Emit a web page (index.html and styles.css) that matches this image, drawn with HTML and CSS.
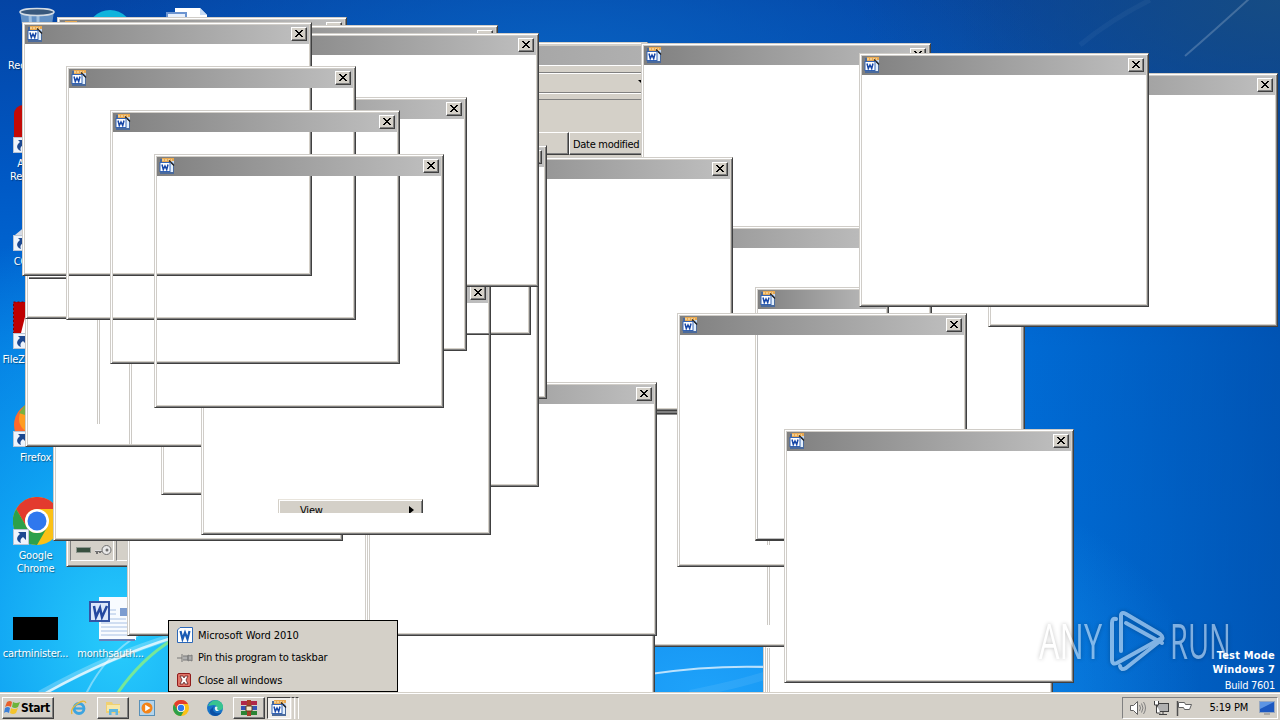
FILE: index.html
```
<!DOCTYPE html>
<html lang="en">
<head>
    <meta charset="UTF-8">
    <meta name="viewport" content="width=device-width, initial-scale=1.0">
    <link rel="stylesheet" href="styles.css">

    <title>Desktop</title>
</head>
<body>
    <svg class="sprites" width="0" height="0">
        <symbol id="doc" viewBox="0 0 16 16">
            <rect x="1" y="1" width="14" height="15" fill="#4a6a9c"/>
            <path d="M3 0h12v4H3z" fill="#e8a850"/>
            <path d="M3 2h10" stroke="#fff0c8" stroke-dasharray="2 1"/>
            <path d="M8 4h3l3 3v7H8z" fill="#e4f0fc"/>
            <path d="M10 2.500l5 5" stroke="#202020" stroke-width="1.3"/>
            <path d="M12 3h3v3z" fill="#c4d8f0"/>
            <rect x="1" y="4.500" width="10" height="9" fill="#fff" stroke="#3464b4"/>
            <path d="M3 6.500l1.300 5L6 8l1.700 3.500L9 6.500" fill="none" stroke="#1848a8" stroke-width="1.5"/>
        </symbol>
        <symbol id="shortcut" viewBox="0 0 16 16">
            <rect x="0.5" y="0.5" width="15" height="15" fill="#eef4fc" stroke="#b8c4d4"/>
            <path d="M5 3h8v8l-3-3c-3 2-3 4-2 6-5-2-5-6-1-9z" fill="#1c4890"/>
        </symbol>
        <symbol id="chrome" viewBox="0 0 48 48">
            <circle cx="24" cy="24" r="24" fill="#fbc116"/>
            <path d="M3.200 12A24 24 0 0 1 44.800 12H24a12 12 0 0 0-10.400 18z" fill="#e33b2e"/>
            <path d="M3.200 12A24 24 0 0 0 24 48l10.400-18a12 12 0 0 1-20.800 0z" fill="#2da04a"/>
            <circle cx="24" cy="24" r="12" fill="#fff"/>
            <circle cx="24" cy="24" r="9.500" fill="#2f78ee"/>
        </symbol>
    </svg>

    <div class="desktop">
        <svg class="rays" viewBox="0 0 1280 720">
            <g fill="none" stroke="#fff">
                <path d="M40 694Q110 655 175 636" stroke-width="7" opacity=".25"/>
                <path d="M44 694Q110 657 175 637" stroke-width="2.500" opacity=".75"/>
                <path d="M86 694Q105 655 140 634" stroke-width="2" opacity=".4"/>
                <path d="M117 694Q140 660 172 640" stroke="#8cf080" stroke-width="3" opacity=".8"/>
                <path d="M650 674Q710 665 768 667" stroke-width="2" opacity=".7"/>
                <path d="M690 694Q740 684 770 674" stroke-width="8" opacity=".08"/>
                <path d="M1250 -2Q1215 30 1185 56" stroke-width="2" opacity=".2"/>
                <path d="M1150 0Q1110 20 1080 45" stroke-width="5" opacity=".04"/>
            </g>
        </svg>

        <div class="icons">
            <div class="icon">
                <svg viewBox="0 0 48 48"><path d="M7 4l6 42h22l6-42z" fill="#7ca4cc" opacity=".8"/><path d="M17 8l2 36M25 8v36" stroke="#c4dcf0" stroke-width="3" opacity=".6"/><ellipse cx="24" cy="5" rx="17" ry="3.500" fill="#38587c" stroke="#d4dce4" stroke-width="1.500"/></svg>
                <span>Recycle Bin</span>
            </div>
            <div class="icon">
                <svg viewBox="0 0 48 48"><rect x="1" width="46" height="46" rx="9" fill="#c40a06"/><use href="#shortcut" y="32" width="16" height="16"/></svg>
                <span>Acrobat Reader DC</span>
            </div>
            <div class="icon">
                <svg viewBox="0 0 48 48"><path d="M2 32L14 22h20v20z" fill="#d8dce4"/><use href="#shortcut" y="32" width="16" height="16"/></svg>
                <span>CCleaner</span>
            </div>
            <div class="icon">
                <svg viewBox="0 0 48 48"><rect x="0.500" y="1" width="46" height="46" fill="#bf0000" stroke="#800000" stroke-dasharray="2 2"/><path d="M8 32l4-16h20v16z" fill="#fff"/><use href="#shortcut" y="32" width="16" height="16"/></svg>
                <span>FileZilla Client</span>
            </div>
            <div class="icon">
                <svg viewBox="0 0 48 48"><circle cx="24" cy="26" r="23" fill="#ff6a2c"/><circle cx="20" cy="20" r="14" fill="#ff9c20"/><path d="M6 14l6-8v10z" fill="#78b040"/><use href="#shortcut" y="32" width="16" height="16"/></svg>
                <span>Firefox</span>
            </div>
            <div class="icon">
                <svg viewBox="0 0 48 48"><use href="#chrome" width="48" height="48"/><use href="#shortcut" y="32" width="16" height="16"/></svg>
                <span>Google Chrome</span>
            </div>
            <div class="icon">
                <svg viewBox="0 0 48 48"><rect y="22" width="45" height="23"/></svg>
                <span>cartminister...</span>
            </div>
            <div class="icon column-two">
                <svg viewBox="0 0 48 48"><circle cx="22" cy="26" r="23" fill="#10b4dc"/></svg>
            </div>
            <div class="icon column-two last-row">
                <svg viewBox="0 0 48 48"><path d="M11 2h37v43H11z" fill="#f8fbff"/><path d="M11 45h36" stroke="#6880b8" stroke-width="2"/><path d="M13 15h15M13 19h15M13 24h25M13 28h30M13 32h30M13 36h30M13 40h30" stroke="#a8c0e4"/><rect x="32" y="13" width="8" height="8" fill="#7c9cd0"/><rect x="2" y="7" width="19" height="19" fill="#dce6fa" stroke="#3454a4" stroke-width="2"/><path d="M6 11l2 11 4-9 2 9 5-11" fill="none" stroke="#2448a0" stroke-width="2.500"/></svg>
                <span>monthsauth...</span>
            </div>
            <div class="icon column-three">
                <svg viewBox="0 0 48 48"><path d="M12 1h25l7 7v38H12z" fill="#fff"/><path d="M37 1v7h7" fill="#c8dcf4"/><rect x="4" y="6" width="19" height="19" fill="#e8f0fc" stroke="#6c94d0" stroke-width="2"/></svg>
            </div>
        </div>

        <div class="explorer">
            <div class="explorer-title"></div>
            <div class="explorer-bar address"></div>
            <div class="explorer-bar tools"><i class="arrow-down"></i></div>
            <div class="explorer-bar info"></div>
            <div class="explorer-head">
                <div class="head-cell name-cell"></div>
                <div class="head-cell">Date modified</div>
            </div>
            <div class="explorer-list"></div>
            <div class="explorer-status">
                <div class="status-cell">
                    <svg width="38" height="14" viewBox="0 0 38 14"><rect x="1.500" y="4.500" width="14" height="5" fill="#385040" stroke="#909890"/><path d="M20 8h9M22 8v3M25 8v2" stroke="#707070" stroke-width="2"/><path d="M20 7.500h9" stroke="#e0e0e0"/><circle cx="31.500" cy="7" r="4.500" fill="#e8e8e8" stroke="#707070"/><circle cx="32" cy="7" r="1.500" fill="#707070"/></svg>
                </div>
                <div class="status-cell wide"></div>
            </div>
        </div>

        <div id="windows"></div>

        <div class="submenu"><span>View</span><i class="arrow-right"></i></div>

        <svg class="watermark" viewBox="0 0 200 70">
            <text x="3" y="53" textLength="63" lengthAdjust="spacingAndGlyphs">ANY</text>
            <text x="134" y="53" textLength="61" lengthAdjust="spacingAndGlyphs">RUN</text>
            <g fill="none" stroke="#fff" stroke-width="4" stroke-linejoin="round" stroke-linecap="round">
                <path d="M80 13q-4-1-4 4v37q0 5 5 3l43-24"/>
                <path d="M85 45V10q0-5 5-2l34 20q5 4 0 7L90 62q-5 3-6-2"/>
                <path d="M90 17l36 20"/>
            </g>
        </svg>

        <div class="build">
            <b>Test Mode</b>
            <b>Windows 7</b>
            <span>Build 7601</span>
        </div>
    </div>

    <div class="jumplist">
        <div class="jump-item">
            <svg viewBox="0 0 16 16"><path d="M3 .5h12.500v15H.5V3z" fill="#fff" stroke="#2c68b8"/><path d="M3.500 4l2 8L8 5.500l2.500 6.500 2-8" fill="none" stroke="#1c5cb4" stroke-width="2.200"/></svg>
            <span class="jump-app">Microsoft Word 2010</span>
        </div>
        <div class="jump-item">
            <svg viewBox="0 0 16 16"><path d="M0 8h5M5 4v8M6 6h5v4H6M11 5q2 2 4 0v6q-2-2-4 0z" fill="#b0b0b0" stroke="#787878"/></svg>
            <span class="jump-pin">Pin this program to taskbar</span>
        </div>
        <div class="jump-item">
            <svg viewBox="0 0 16 16"><rect x="0.500" y="1.500" width="13" height="13" rx="1.500" fill="#e07468" stroke="#901c1c"/><path d="M3 4h3l1 2 1-2h3L9 8l2 4H8l-1-2-1 2H3l2-4z" fill="#fff" stroke="#602020" stroke-width=".8"/></svg>
            <span class="jump-close">Close all windows</span>
        </div>
    </div>

    <div class="taskbar">
        <div class="start">
            <svg width="17" height="15" viewBox="0 0 17 15"><path d="M3 2q3-2 5 0L7 7Q4 5 1 7z" fill="#e8602c"/><path d="M9 2q3 2 7 0l-2 5q-3 2-6 0z" fill="#6cb43c"/><path d="M1 8q3-2 5 0l-1 5q-3-2-5 0z" fill="#3c80d8"/><path d="M7 8q3 2 7 0l-2 5q-3 2-6 0z" fill="#f4c42c"/></svg>
            <b>Start</b>
        </div>
        <div class="task">
            <svg viewBox="0 0 16 16"><circle cx="8" cy="8.500" r="5" fill="none" stroke="#3ca4e0" stroke-width="2.800"/><path d="M4 8.500h9" stroke="#3ca4e0" stroke-width="2.200"/><path d="M1 14Q-1 9 6 4t9-1" fill="none" stroke="#e8b838" stroke-width="1.300"/></svg>
        </div>
        <div class="task raised">
            <svg viewBox="0 0 16 16"><path d="M1 2h6l1 2h7v9H1z" fill="#f0d070"/><path d="M2 5h13v6H2z" fill="#f8e8a8"/><path d="M4 15V9h9v6h-2.500v-3h-4v3z" fill="#60b8e0"/></svg>
        </div>
        <div class="task">
            <svg viewBox="0 0 16 16"><rect x=".5" y=".5" width="15" height="15" fill="#b4d4ec" stroke="#5890b8"/><circle cx="8" cy="8" r="5.500" fill="#f48418"/><path d="M6.200 4.800v6.400L11.500 8z" fill="#fff"/></svg>
        </div>
        <div class="task">
            <svg viewBox="0 0 16 16"><use href="#chrome" width="16" height="16"/></svg>
        </div>
        <div class="task">
            <svg viewBox="0 0 16 16"><circle cx="8" cy="8" r="8" fill="#1874c8"/><path d="M1 6Q4 0 9 .3q7 1 7 7 0 3-4 3-4 0-2-3-1-3-5-2z" fill="#38c490"/><path d="M7 6q-3 5 2 7 4 1 6-1-3 4-7 4-6-1-5-6z" fill="#0c50a4"/><path d="M8 7q1-1 2.500 0-1.500 3 2.500 4H9Q7 9 8 7z" fill="#e8f4f4"/></svg>
        </div>
        <div class="task raised">
            <svg viewBox="0 0 16 16"><path d="M0 1h16v4H0z" fill="#b02848"/><path d="M0 6h16v4H0z" fill="#3454b4"/><path d="M0 11h16v4H0z" fill="#2c8434"/><path d="M6 0h4v16H6z" fill="#a83c28"/><path d="M5 6h6v5H5z" fill="#f4e8c8" stroke="#604020"/></svg>
        </div>
        <div class="task pressed">
            <svg viewBox="0 0 16 16"><use href="#doc" width="16" height="16"/></svg>
        </div>
        <div class="stack"></div>
        <div class="stack"></div>
        <div class="tray">
            <svg width="17" height="16" viewBox="0 0 17 16"><path d="M1.500 5.500h3l4-4v13l-4-4h-3z" fill="#fff" stroke="#606060"/><path d="M10.500 5q2 3 0 6M12.500 3.500q3 4.500 0 9M14.500 2q4 6 0 12" fill="none" stroke="#808080"/></svg>
            <svg width="16" height="16" viewBox="0 0 16 16"><rect x="4.500" y="3.500" width="11" height="8" fill="#b0b0b0" stroke="#404040"/><path d="M6 14.500h8M10 12v2" stroke="#404040"/><path d="M1.500 1v4h4V1M3.500 5v8h4" fill="#fff" stroke="#404040"/></svg>
            <svg width="17" height="16" viewBox="0 0 17 16"><path d="M1.500 1v15" stroke="#505050" stroke-width="1.500"/><path d="M2.500 2.500h6l1 2h6l-2 5h-5l-1-2h-5z" fill="#fff" stroke="#606060"/></svg>
            <span class="clock">5:19 PM</span>
            <svg class="show-desktop" width="16" height="14" viewBox="0 0 16 14"><rect x=".5" y=".5" width="15" height="11" fill="#1c58c0" stroke="#98a8c0"/><path d="M1 1h14L1 8z" fill="#5c94e4"/><path d="M5 13h6" stroke="#808080"/></svg>
        </div>
    </div>

    <script>
        // back to front: [x, y, kind, width, height]
        const windows = [
            [127, 382],
            [735, 210],
            [763, 450],
            [642, 100],
            [641, 43],
            [599, 226],
            [600, 393],
            [365, 450],
            [53, 287],
            [161, 241],
            [25, 193],
            [25, 65],
            [755, 287, 'window', 134, 254],
            [443, 157],
            [677, 313],
            [755, 335, 'trail', 31, 206],
            [988, 73],
            [859, 53],
            [784, 429],
            [367, 382],
            [257, 145],
            [249, 233],
            [241, 81],
            [201, 281],
            [467, 333, 'edge-h', 22, 2],
            [57, 17],
            [208, 25],
            [249, 33],
            [177, 97],
            [66, 66, 'blank'],
            [110, 110, 'blank'],
            [154, 154, 'blank'],
            [22, 22],
            [29, 277, 'edge-h', 37, 2],
            [66, 66, 'hollow'],
            [110, 110, 'hollow'],
            [154, 154, 'hollow'],
            // edges left behind by dragged windows
            [97, 320, 'edge-v', 3, 104],
            [129, 364, 'edge-v', 3, 81],
            [1021, 327, 'edge-v', 1, 103],
            [767, 541, 'edge-v', 3, 4],
            [767, 567, 'edge-v', 3, 58],
            [767, 648, 'edge-v', 3, 44],
            [657, 411, 'edge-h', 20, 3]
        ];

        const frame = `
            <div class="title">
                <svg class="title-icon"><use href="#doc" width="16" height="16"/></svg>
                <div class="close"><svg width="10" height="8" viewBox="0 0 10 8"><path d="M1 0h2v1h1v1h2V1h1V0h2v1H8v1H7v1H6v1h1v1h1v1h1v1H7V6H6V5H4v1H3v1H1V6h1V5h1V4h1V3H3V2H2V1H1z"/></svg></div>
            </div>`;

        const layer = document.getElementById('windows');
        windows.forEach(([x, y, kind = 'window', w = 290, h = 254]) => {
            const el = document.createElement('div');
            el.className = kind === 'hollow' ? 'window hollow' : kind;
            el.style.cssText = `left:${x}px;top:${y}px;width:${w}px;height:${h}px`;
            if (kind === 'window' || kind === 'hollow') {
                el.innerHTML = frame;
            }
            layer.appendChild(el);
        });
    </script>
</body>
</html>
```
FILE: styles.css
```
* {
    box-sizing: border-box;
}

body {
    margin: 0;
    width: 1280px;
    height: 720px;
    overflow: hidden;
    display: flex;
    flex-direction: column;
    font-family: "DejaVu Sans Condensed", "DejaVu Sans", sans-serif;
    font-stretch: condensed;
    font-size: 11px;
    letter-spacing: -0.2px;
    color: black;
}

.sprites {
    position: absolute;
}

.desktop {
    position: relative;
    height: 692px;
    overflow: hidden;
    background:
        radial-gradient(ellipse 330px 420px at 120px 640px, #28ccfc 0%, rgba(20, 180, 250, 0.7) 45%, rgba(0, 150, 240, 0) 100%),
        radial-gradient(ellipse 420px 200px at 1280px 0, #164c84 0%, rgba(20, 76, 136, 0) 100%),
        radial-gradient(ellipse 500px 260px at 700px 690px, #1ea2fa 0%, rgba(20, 140, 240, 0) 100%),
        linear-gradient(90deg, rgba(0, 60, 150, 0) 75%, rgba(0, 56, 140, 0.5) 100%),
        radial-gradient(ellipse 500px 160px at 560px 60px, #0860c0 0%, rgba(0, 90, 190, 0) 100%),
        linear-gradient(180deg, #0444a4 0%, #0058c4 25%, #0070dc 50%, #0074e0 100%);
}

.rays,
#windows {
    position: absolute;
    left: 0;
    top: 0;
    width: 1280px;
    height: 720px;
}

/* desktop icons */

.icons {
    display: grid;
    grid-template-columns: repeat(3, 71px);
    grid-template-rows: repeat(7, 98px);
    grid-auto-flow: column;
    column-gap: 4px;
    color: white;
}

.icon {
    position: relative;
    display: flex;
    flex-direction: column;
    align-items: center;
    padding-top: 7px;
    gap: 4px;
    line-height: 13px;
    text-align: center;
}

.icon svg {
    width: 48px;
    height: 48px;
    flex-shrink: 0;
    margin-left: 2px;
}

.icon span {
    text-shadow: 1px 1px 1px rgba(0, 0, 0, 0.4);
    max-width: 71px;
}

.column-two {
    grid-column: 2;
    grid-row: 1;
}

.last-row {
    grid-row: 7;
}

.column-three {
    grid-column: 3;
    grid-row: 1;
}

/* windows */

.window {
    position: absolute;
    background: white;
    border: 1px solid;
    border-color: #d0cdc8 #404040 #404040 #d0cdc8;
    box-shadow: inset 1px 1px white, inset -1px -1px #808080, inset 2px 2px #d0cdc8, inset -2px -2px #d4d0c8;
    padding: 2px;
}

.hollow {
    background: none;
}

.title {
    display: flex;
    justify-content: space-between;
    align-items: flex-start;
    height: 19px;
    padding: 0 2px;
    background: linear-gradient(90deg, #808080, #c0c0c0);
    overflow: hidden;
}

.title-icon {
    width: 16px;
    height: 16px;
    margin-top: 1px;
}

.close {
    display: flex;
    align-items: center;
    justify-content: center;
    width: 16px;
    height: 14px;
    margin-top: 2px;
    background: #d4d0c8;
    border: 1px solid;
    border-color: white #404040 #404040 white;
    box-shadow: inset -1px -1px #808080;
}

.blank {
    position: absolute;
    background: white;
}

.trail {
    position: absolute;
    border-left: 1px solid #d4d0c8;
    border-bottom: 2px solid #404040;
    box-shadow: inset 1px 0 white, inset 2px -1px #c0c0c0;
}

.edge-v {
    position: absolute;
    border-left: 1px solid #ccc9c4;
    border-right: 1px solid #ccc9c4;
}

.edge-h {
    position: absolute;
    background: #808080;
    border-top: 1px solid #808080;
    border-bottom: 1px solid #404040;
}

/* explorer */

.explorer {
    position: absolute;
    left: 66px;
    top: 42px;
    width: 582px;
    height: 525px;
    padding: 3px;
    display: flex;
    flex-direction: column;
    background: #d4d0c8;
    border: 1px solid;
    border-color: #d4d0c8 #404040 #404040 #d4d0c8;
    box-shadow: inset 1px 1px white, inset -1px -1px #808080;
}

.explorer-title {
    height: 19px;
    background: linear-gradient(90deg, #808080, #b0b0b0);
}

.explorer-bar {
    border-top: 1px solid white;
    border-bottom: 1px solid #808080;
}

.address {
    height: 8px;
}

.tools {
    height: 20px;
    display: flex;
    justify-content: flex-end;
    align-items: center;
}

.arrow-down {
    border: 3px solid transparent;
    border-top-color: black;
    border-bottom: 0;
    margin-bottom: 3px;
}

.info {
    height: 7px;
    margin-bottom: 32px;
}

.explorer-head {
    display: flex;
    height: 23px;
}

.head-cell {
    flex: 1;
    padding: 5px 3px;
    line-height: 13px;
    letter-spacing: -0.3px;
    white-space: nowrap;
    border: 1px solid;
    border-color: white #404040 #404040 white;
    box-shadow: inset -1px -1px #808080;
}

.name-cell {
    flex: 0 0 499px;
}

.explorer-list {
    flex: 1;
}

.explorer-status {
    display: flex;
    gap: 2px;
    height: 24px;
    padding-bottom: 2px;
}

.status-cell {
    width: 44px;
    padding: 3px 2px 0 4px;
    border: 1px solid;
    border-color: #808080 white white #808080;
}

.status-cell.wide {
    flex: 1;
}

.submenu {
    position: absolute;
    left: 278px;
    top: 499px;
    width: 145px;
    height: 14px;
    overflow: hidden;
    display: flex;
    justify-content: space-between;
    padding: 3px 8px 0 21px;
    line-height: 15px;
    background: #d4d0c8;
    border-top: 1px solid #e8e4dc;
    border-left: 1px solid #d4d0c8;
    border-right: 1px solid #404040;
    box-shadow: inset 1px 1px white, inset -1px 0 #808080;
}

.arrow-right {
    height: 8px;
    margin-top: 3px;
    border: 4px solid transparent;
    border-left: 5px solid black;
    border-right: 0;
}

/* text over the wallpaper */

.build {
    position: absolute;
    right: 5px;
    bottom: -2px;
    display: flex;
    flex-direction: column;
    align-items: flex-end;
    line-height: 14px;
    color: white;
}

.build b {
    font-size: 11px;
    letter-spacing: 0.2px;
}

.build span {
    line-height: 16px;
    padding-top: 1px;
    letter-spacing: -0.3px;
}

.watermark {
    position: absolute;
    left: 1036px;
    top: 606px;
    width: 200px;
    height: 70px;
    opacity: 0.5;
    fill: white;
    font: 400 49px "Open Sans", "Noto Sans", sans-serif;
    letter-spacing: 0;
    filter: drop-shadow(0 0 2px rgba(0, 0, 0, 0.5));
}

/* taskbar */

.jumplist {
    position: absolute;
    left: 168px;
    top: 620px;
    width: 230px;
    height: 72px;
    padding: 3px 8px;
    background: #d4d0c8;
    border: 1px solid black;
}

.jump-item {
    display: flex;
    align-items: center;
    gap: 5px;
    height: 22.500px;
}

.jump-item svg {
    width: 16px;
    height: 16px;
}

.jump-app {
    letter-spacing: -0.05px;
}

.taskbar {
    display: flex;
    align-items: center;
    height: 28px;
    padding: 3px 2px 0 2px;
    background: #d4d0c8;
    box-shadow: inset 0 1px #d4d0c8, inset 0 2px white;
}

.start {
    display: flex;
    align-items: center;
    gap: 0;
    width: 52px;
    height: 22px;
    padding-left: 1px;
    margin-right: 9px;
    border: 1px solid;
    border-color: white #404040 #404040 white;
    box-shadow: inset -1px -1px #808080;
}

.start b {
    font-size: 12px;
    letter-spacing: -0.4px;
}

.task {
    display: flex;
    align-items: center;
    justify-content: center;
    width: 32px;
    height: 22px;
    margin-right: 2px;
    border: 1px solid transparent;
}

.task svg {
    width: 16px;
    height: 16px;
}

.raised {
    border-color: white #404040 #404040 white;
    box-shadow: inset -1px -1px #808080;
}

.pressed {
    width: 24px;
    margin-right: 0;
    background: #f0eeea;
    border-color: #404040 white white #404040;
}

.stack {
    width: 4px;
    height: 22px;
    border-top: 1px solid #404040;
    border-right: 1px solid white;
    border-left: 1px solid #e4e0dc;
}

.tray {
    display: flex;
    align-items: center;
    gap: 7px;
    height: 22px;
    margin-left: auto;
    padding: 0 2px 0 6px;
    border: 1px solid;
    border-color: #808080 white white #808080;
}

.clock {
    margin: 0 4px 0 10px;
}
```
